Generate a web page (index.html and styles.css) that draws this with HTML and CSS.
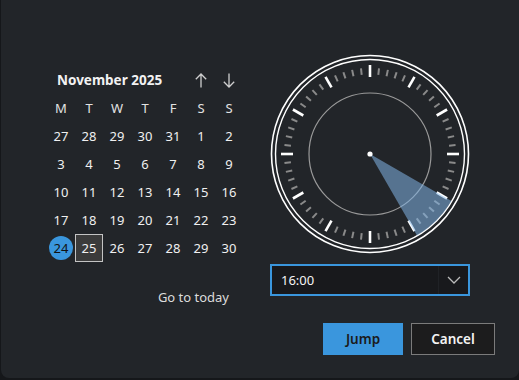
FILE: index.html
```html
<!DOCTYPE html>
<html lang="en">
<head>
    <meta charset="UTF-8">
    <meta name="viewport" content="width=device-width, initial-scale=1.0">
    <title>Jump to date</title>
    <link rel="stylesheet" href="styles.css">
</head>
<body>
    <div class="dialog">
        <div class="main">
            <!-- Calendário -->
            <div class="calendar">
                <div class="cal-head">
                    <span class="month">November 2025</span>
                    <button type="button" class="nav">
                        <svg width="12" height="15" viewBox="0 0 12 15"><path d="M6 14.5 V1 M0.8 6.2 L6 1 L11.2 6.2" fill="none" stroke="#cfcfcf" stroke-width="1.3"/></svg>
                    </button>
                    <button type="button" class="nav">
                        <svg width="12" height="15" viewBox="0 0 12 15"><path d="M6 0.5 V14 M0.8 8.8 L6 14 L11.2 8.8" fill="none" stroke="#cfcfcf" stroke-width="1.3"/></svg>
                    </button>
                </div>
                <div class="grid days">
                    <span>M</span><span>T</span><span>W</span><span>T</span><span>F</span><span>S</span><span>S</span>
                </div>
                <div class="grid dates">
                    <span>27</span><span>28</span><span>29</span><span>30</span><span>31</span><span>1</span><span>2</span>
                    <span>3</span><span>4</span><span>5</span><span>6</span><span>7</span><span>8</span><span>9</span>
                    <span>10</span><span>11</span><span>12</span><span>13</span><span>14</span><span>15</span><span>16</span>
                    <span>17</span><span>18</span><span>19</span><span>20</span><span>21</span><span>22</span><span>23</span>
                    <span class="today">24</span><span class="selected">25</span><span>26</span><span>27</span><span>28</span><span>29</span><span>30</span>
                </div>
                <div class="goto">Go to today</div>
            </div>

            <!-- Relógio -->
            <div class="clock-col">
                <svg class="clock" width="200" height="200" viewBox="-100 -100 200 200" id="clock">
                    <circle r="98.5" fill="none" stroke="#fff" stroke-width="1.6"/>
                    <circle r="94.5" fill="none" stroke="#fff" stroke-width="1.4"/>
                    <circle r="61" fill="none" stroke="#9a9a9a" stroke-width="1.2"/>
                    <g id="ticks"></g>
                    <path d="M0 0 L81.4 47 A94 94 0 0 1 47 81.4 Z" fill="rgb(130,180,230)" fill-opacity="0.55"/>
                    <circle r="2.6" fill="#fff"/>
                </svg>
                <div class="select">
                    <span class="value">16:00</span>
                    <span class="arrow">
                        <svg width="14" height="8" viewBox="0 0 14 8"><path d="M1 1 L7 7 L13 1" fill="none" stroke="#bbb" stroke-width="1.3"/></svg>
                    </span>
                </div>
            </div>
        </div>

        <div class="actions">
            <button type="button" class="btn primary">Jump</button>
            <button type="button" class="btn">Cancel</button>
        </div>
    </div>

    <script>
        // Marcas do mostrador: 60 traços, os de 5 em 5 maiores
        var g = document.getElementById('ticks');
        var ns = 'http://www.w3.org/2000/svg';
        for (var i = 0; i < 60; i++) {
            var major = i % 5 === 0;
            var a = i * Math.PI / 30;
            var r1 = major ? 77 : 79.5;
            var r2 = major ? 89 : 86;
            var l = document.createElementNS(ns, 'line');
            l.setAttribute('x1', (Math.sin(a) * r1).toFixed(2));
            l.setAttribute('y1', (-Math.cos(a) * r1).toFixed(2));
            l.setAttribute('x2', (Math.sin(a) * r2).toFixed(2));
            l.setAttribute('y2', (-Math.cos(a) * r2).toFixed(2));
            l.setAttribute('stroke', major ? '#fff' : '#8a8a8a');
            l.setAttribute('stroke-width', major ? '2.6' : '2');
            g.appendChild(l);
        }
    </script>
</body>
</html>
```

FILE: styles.css
```css
body {
    margin: 0;
    background-color: #15171a;
    font-family: "Noto Sans", "Open Sans", sans-serif;
    color: #f0f0f0;
}

.dialog {
    margin-left: 1px;
    height: 378px;
    box-sizing: border-box;
    padding: 54px 24px 0 46px;
    background-color: #222529;
    border-radius: 0 0 8px 8px;
}

.main {
    display: flex;
    gap: 27px;
}

/* Calendário */
.calendar {
    width: 196px;
    margin-top: 12px;
}

.cal-head {
    display: grid;
    grid-template-columns: 140px 28px 28px;
    height: 28px;
    align-items: center;
}

.month {
    padding-left: 10px;
    font-size: 13.5px;
    font-weight: bold;
    color: #f2f2f2;
}

.nav {
    background: none;
    border: none;
    padding: 0;
    height: 28px;
    display: flex;
    align-items: center;
    justify-content: center;
}

.grid {
    display: grid;
    grid-template-columns: repeat(7, 28px);
    grid-auto-rows: 28px;
    font-size: 13px;
}

.grid span {
    display: flex;
    align-items: center;
    justify-content: center;
}

.days span {
    color: #e2e2e2;
}

.dates span.today {
    width: 24px;
    height: 24px;
    margin: 2px;
    border-radius: 50%;
    background-color: #3a96dd;
    color: #111;
}

.dates span.selected {
    box-sizing: border-box;
    border: 1px solid #c4c4c4;
    background-color: #3b3b3b;
}

.goto {
    margin-top: 21px;
    height: 28px;
    line-height: 28px;
    text-align: right;
    padding-right: 14px;
    font-size: 13px;
    color: #dcdcdc;
}

/* Relógio */
.clock-col {
    width: 200px;
}

.clock {
    display: block;
}

.select {
    margin-top: 10px;
    height: 32px;
    box-sizing: border-box;
    border: 2px solid #3a96dd;
    background-color: #18191c;
    display: flex;
    align-items: center;
}

.value {
    flex: 1;
    padding-left: 9px;
    font-size: 13px;
    color: #f4f4f4;
}

.arrow {
    width: 29px;
    height: 100%;
    border-left: 1px solid #202226;
    display: flex;
    align-items: center;
    justify-content: center;
}

/* Botões */
.actions {
    display: flex;
    justify-content: flex-end;
    gap: 8px;
    margin-top: 12px;
}

.btn {
    height: 32px;
    width: 84px;
    box-sizing: border-box;
    font-family: "Noto Sans", sans-serif;
    font-size: 13.5px;
    font-weight: 600;
    color: #f4f4f4;
    background-color: #1c1c1d;
    border: 1px solid #7b7b7b;
}

.btn.primary {
    width: 80px;
    background-color: #3a96dd;
    border-color: #3a96dd;
    color: #1b1b1b;
}
```
